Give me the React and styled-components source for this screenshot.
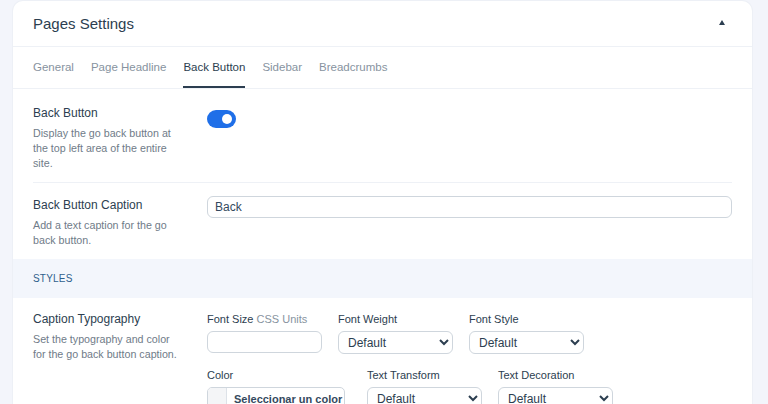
import React from 'react'
import styled, { createGlobalStyle } from 'styled-components'

const GlobalStyle = createGlobalStyle`
  body {
    margin: 0;
    background: #f3f5fb;
    font-family: "Liberation Sans", Arial, sans-serif;
    color: #2c3e50;
  }
`

const Page = styled.div`
  padding: 1px 16px 0 13px;
  height: 403px;
  overflow: hidden;
`

const Card = styled.div`
  background: #fff;
  border-radius: 10px 10px 0 0;
  box-shadow: 0 0 0 1px #edf0f6;
`

const Header = styled.div`
  height: 45px;
  display: flex;
  align-items: center;
  justify-content: space-between;
  padding: 0 27px 0 20px;
  border-bottom: 1px solid #eef1f6;
`

const Title = styled.h2`
  margin: 0;
  font-size: 15px;
  font-weight: 400;
  color: #2c3e50;
`

const Caret = styled.span`
  width: 0;
  height: 0;
  border-left: 3.5px solid transparent;
  border-right: 3.5px solid transparent;
  border-bottom: 5px solid #2c3e50;
  margin-top: -2px;
`

const Tabs = styled.div`
  height: 41px;
  display: flex;
  gap: 17px;
  padding: 0 20px;
  border-bottom: 1px solid #eef1f6;
`

const Tab = styled.div`
  display: flex;
  align-items: center;
  font-size: 11.5px;
  color: ${p => p.active ? '#2c3e50' : '#8793a0'};
  border-bottom: 2px solid ${p => p.active ? '#2c3e50' : 'transparent'};
  padding-top: 1px;
`

const Row = styled.div`
  display: flex;
  margin: 0 20px;
  padding: ${p => p.top}px 0 ${p => p.bottom}px;
  border-bottom: ${p => p.divider ? '1px solid #eef1f6' : 'none'};
`

const Info = styled.div`
  width: 174px;
  flex-shrink: 0;
`

const Label = styled.div`
  font-size: 12px;
  line-height: 18px;
  color: #2c3e50;
`

const Desc = styled.div`
  margin-top: 4px;
  width: 150px;
  font-size: 10.7px;
  line-height: 15px;
  color: #6f7b88;
`

const Control = styled.div`
  flex: 1;
`

const Toggle = styled.div`
  width: 29px;
  height: 18px;
  margin-top: 6px;
  border-radius: 9px;
  background: #1f6fe8;
  position: relative;

  &::after {
    content: '';
    position: absolute;
    right: 4px;
    top: 4px;
    width: 10px;
    height: 10px;
    border-radius: 50%;
    background: #fff;
  }
`

const TextInput = styled.input`
  box-sizing: border-box;
  width: ${p => p.width || '100%'};
  height: 22px;
  padding: 0 7px;
  border: 1px solid #cfd6dd;
  border-radius: 6px;
  font-family: inherit;
  font-size: 12px;
  color: #34495e;
  background: #fff;
  outline: none;
`

const SectionBand = styled.div`
  height: 39px;
  display: flex;
  align-items: center;
  padding: 0 20px;
  background: #f3f6fc;
  font-size: 10px;
  letter-spacing: 0.2px;
  color: #2f5f8c;
`

const Fields = styled.div`
  display: flex;
  flex-direction: column;
  gap: 12px;
`

const FieldRow = styled.div`
  display: flex;
  gap: ${p => p.gap || 16}px;
`

const Field = styled.div`
  display: flex;
  flex-direction: column;
  gap: 3px;
`

const FieldLabel = styled.div`
  font-size: 11px;
  line-height: 18px;
  color: #2c3e50;

  span {
    color: #8793a0;
  }
`

const Select = styled.select`
  box-sizing: border-box;
  width: 115px;
  height: 23px;
  padding: 0 5px;
  border: 1px solid #cfd6dd;
  border-radius: 6px;
  font-family: inherit;
  font-size: 12px;
  color: #2c3e50;
  background: #fff;
`

const ColorButton = styled.button`
  display: flex;
  align-items: stretch;
  width: 138px;
  height: 24px;
  padding: 0;
  border: 1px solid #cfd6dd;
  border-radius: 5px;
  background: #fff;
  overflow: hidden;
  font-family: inherit;
`

const Swatch = styled.span`
  width: 18px;
  flex-shrink: 0;
  background: #f4f5f7;
  border-right: 1px solid #dde2e8;
`

const ColorText = styled.span`
  display: flex;
  align-items: center;
  padding-left: 7px;
  white-space: nowrap;
  font-size: 11px;
  font-weight: 700;
  color: #34495e;
`

const tabs = ['General', 'Page Headline', 'Back Button', 'Sidebar', 'Breadcrumbs']

const SelectField = ({ label }) => (
  <Field>
    <FieldLabel>{label}</FieldLabel>
    <Select defaultValue="default">
      <option value="default">Default</option>
    </Select>
  </Field>
)

const App = () => (
  <Page>
    <GlobalStyle />
    <Card>
      <Header>
        <Title>Pages Settings</Title>
        <Caret />
      </Header>
      <Tabs>
        {tabs.map(t => <Tab key={t} active={t === 'Back Button'}>{t}</Tab>)}
      </Tabs>

      <Row divider top={15} bottom={11}>
        <Info>
          <Label>Back Button</Label>
          <Desc>Display the go back button at the top left area of the entire site.</Desc>
        </Info>
        <Control>
          <Toggle />
        </Control>
      </Row>

      <Row top={13} bottom={11}>
        <Info>
          <Label>Back Button Caption</Label>
          <Desc>Add a text caption for the go back button.</Desc>
        </Info>
        <Control>
          <TextInput defaultValue="Back" />
        </Control>
      </Row>

      <SectionBand>STYLES</SectionBand>

      <Row top={12} bottom={12}>
        <Info>
          <Label>Caption Typography</Label>
          <Desc>Set the typography and color for the go back button caption.</Desc>
        </Info>
        <Control>
          <Fields>
            <FieldRow>
              <Field>
                <FieldLabel>Font Size <span>CSS Units</span></FieldLabel>
                <TextInput width="115px" />
              </Field>
              <SelectField label="Font Weight" />
              <SelectField label="Font Style" />
            </FieldRow>
            <FieldRow gap={22}>
              <Field>
                <FieldLabel>Color</FieldLabel>
                <ColorButton>
                  <Swatch />
                  <ColorText>Seleccionar un color</ColorText>
                </ColorButton>
              </Field>
              <FieldRow>
                <SelectField label="Text Transform" />
                <SelectField label="Text Decoration" />
              </FieldRow>
            </FieldRow>
          </Fields>
        </Control>
      </Row>
    </Card>
  </Page>
)

export default App
